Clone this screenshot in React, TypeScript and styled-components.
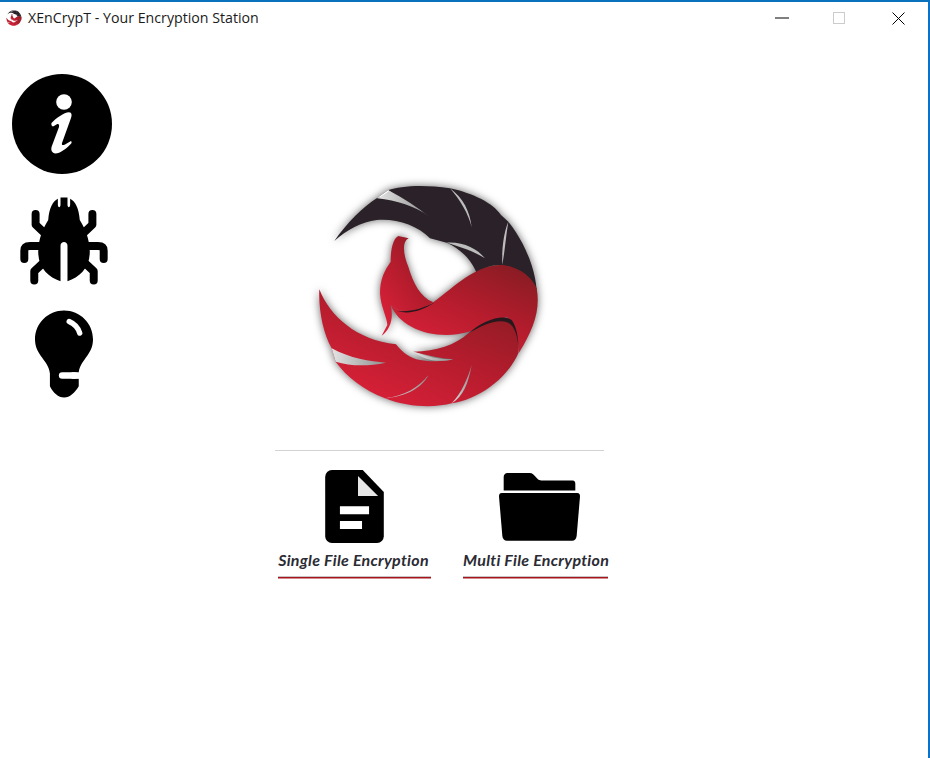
import React from "react";
import styled, { createGlobalStyle } from "styled-components";

const Global = createGlobalStyle`
  html, body { margin: 0; padding: 0; background: #fff; }
  * { box-sizing: border-box; }
`;

const Window = styled.div`
  width: 930px;
  height: 758px;
  background: #fff;
  border-top: 2px solid #0a72bd;
  border-right: 2px solid #0a72c8;
  display: flex;
  flex-direction: column;
  overflow: hidden;
`;

const TitleBar = styled.header`
  height: 35px;
  flex: none;
  display: flex;
  align-items: center;
  padding: 0 1px 3px 6px;
`;

const TitleIcon = styled.span`
  width: 16px;
  height: 16px;
  margin-right: 6px;
  display: flex;
`;

const Title = styled.h1`
  flex: 1;
  margin: 0 0 2px;
  font: 400 14.2px "Open Sans", "Noto Sans", sans-serif;
  color: #1b1b1b;
`;

const Control = styled.button<{ $nudge?: number }>`
  width: 58px;
  height: 30px;
  padding: 0 ${(p) => (p.$nudge ? p.$nudge * 2 : 0)}px 0 0;
  border: 0;
  background: none;
  display: flex;
  align-items: center;
  justify-content: center;
`;

const Body = styled.main`
  flex: 1;
  display: flex;
`;

const Sidebar = styled.nav`
  width: 124px;
  flex: none;
  padding-top: 37px;
  display: flex;
  flex-direction: column;
  align-items: center;
`;

const SideButton = styled.button<{ $gap: number; $shift: number }>`
  padding: 0;
  border: 0;
  background: none;
  display: block;
  line-height: 0;
  margin-left: ${(p) => p.$shift}px;
  margin-bottom: ${(p) => p.$gap}px;
`;

const Center = styled.section`
  width: 329px;
  margin-left: 151px;
  padding-top: 133px;
  display: flex;
  flex-direction: column;
  align-items: center;
`;

const LogoBox = styled.div`
  width: 280px;
  height: 250px;
  line-height: 0;
`;

const Divider = styled.hr`
  width: 329px;
  height: 1px;
  margin: 30px 0 19px;
  border: 0;
  background: #d2d2d2;
`;

const Actions = styled.div`
  align-self: flex-start;
  margin-left: 3px;
  display: flex;
  gap: 32px;
`;

const Action = styled.button<{ $width: number }>`
  width: ${(p) => p.$width}px;
  padding: 0;
  border: 0;
  background: none;
  display: flex;
  flex-direction: column;
  align-items: center;
`;

const ActionIcon = styled.span<{ $shift: number }>`
  height: 73px;
  display: flex;
  align-items: center;
  margin-left: ${(p) => p.$shift}px;
`;

const ActionLabel = styled.span<{ $nudge: number }>`
  width: 100%;
  height: 35px;
  padding: 6px ${(p) => p.$nudge}px 0 0;
  white-space: nowrap;
  text-align: center;
  letter-spacing: 0.28px;
  font: italic 700 16px/22px "Lato", "Open Sans", sans-serif;
  color: #2b2b33;
  border-bottom: 1px solid #a8141c;
  box-shadow: inset 0 -1px 0 #c9c4c4, 0 1px 0 rgba(168, 20, 28, 0.5);
`;

const Logo = ({ width, height, viewBox, soft }: { width: number; height: number; viewBox: string; soft?: boolean }) => (
  <svg width={width} height={height} viewBox={viewBox} style={soft ? { filter: "drop-shadow(0 0 4px rgba(0,0,0,.6))" } : undefined}>
    <defs>
      <linearGradient id="lg-red" x1="0.9" y1="0.1" x2="0.25" y2="0.95">
        <stop offset="0" stopColor="#8c1c24" />
        <stop offset="0.45" stopColor="#b21c2c" />
        <stop offset="1" stopColor="#d82038" />
      </linearGradient>
      <linearGradient id="lg-slit" x1="0" y1="0" x2="1" y2="0">
        <stop offset="0" stopColor="#e4e4e4" />
        <stop offset="1" stopColor="#8e8e8e" />
      </linearGradient>
    </defs>
    <path
      fill="#2a2228"
      d="M103 213C140 160 190 110 230 85L265 60C300 48 370 42 450 55C520 70 580 100 603 135L625 155C670 210 705 290 710 360L640 300L600 285C570 285 550 295 530 310C520 280 490 240 440 218L390 205C350 165 290 145 230 150C185 155 140 180 103 213Z"
    />
    <path
      fill="url(#lg-red)"
      d="M272 405C295 460 360 495 440 495C530 495 585 445 622 442C650 470 658 510 656 550C700 480 722 420 710 355C690 310 640 285 600 285C520 290 470 345 400 397C350 430 300 432 272 405Z"
    />
    <path
      fill="url(#lg-red)"
      d="M326 205L295 198C280 205 272 235 272 275C255 300 240 325 240 370C242 410 262 445 262 465L245 497C270 480 282 445 272 405C300 432 350 430 400 397C360 380 340 340 325 290C310 255 305 215 326 205Z"
    />
    <path
      fill="url(#lg-red)"
      d="M58 358C90 440 170 510 288 523C310 550 330 565 360 570C400 578 440 572 460 568C420 565 380 555 340 545C410 545 465 525 505 490C550 465 600 440 625 445C650 470 660 510 655 550C620 630 530 690 455 700C410 712 330 715 255 685C190 660 140 620 107 575L95 535C70 490 55 420 58 358Z"
    />
    <path fill="#26181c" d="M290 423C330 435 370 420 405 397C370 415 330 428 290 423ZM505 490C550 450 610 430 635 450C650 470 655 500 656 545C655 500 645 470 625 458C590 445 550 465 505 490Z" />
    <path fill="url(#lg-slit)" d="M95 535C150 565 210 575 258 578C200 590 150 588 107 575Z" />
    <path fill="url(#lg-slit)" d="M255 685C310 680 360 650 385 615C370 650 320 680 255 685Z" />
    <path fill="url(#lg-slit)" d="M340 545C380 560 420 568 460 568C420 578 375 572 340 545Z" />
    <path fill="url(#lg-slit)" d="M455 700C485 670 505 620 515 585C505 640 490 680 455 700Z" />
    <path fill="#fff" d="M230 85L265 60L280 72Z" />
    <path fill="url(#lg-slit)" d="M232 85C290 92 345 108 388 140C350 110 310 84 268 62C255 72 245 78 232 85Z" />
    <path fill="#bdbdbd" d="M450 55C480 90 505 130 515 172C510 125 490 85 450 55ZM440 218C480 230 525 245 555 265C530 235 490 215 440 218ZM625 155C610 190 605 240 607 285C615 240 618 195 625 155Z" />
  </svg>
);

const InfoIcon = () => (
  <svg width="100" height="100" viewBox="0 0 100 100">
    <circle cx="50" cy="50" r="50" fill="#000" />
    <circle cx="52" cy="28" r="7.8" fill="#fff" />
    <path
      fill="#fff"
      d="M39.5 49C44 44 52 38.5 57 38.2C60 38.5 60 41 59 44L50 69C49.5 71.5 51 71.5 53 70.5L59 67C60 68 59.8 69 58.5 70.3C54 75 48 79.5 43.5 79.5C40 79 38.5 76.5 39.7 72.5L47 53C47.5 50.5 46.5 49.5 44.5 50.5L41 52.5C39.7 52 39 50.5 39.5 49Z"
    />
  </svg>
);

const BugIcon = () => (
  <svg width="88" height="88" viewBox="0 0 265 262">
    <g fill="none" stroke="#000" strokeWidth="24" strokeLinecap="round" strokeLinejoin="round">
      <path d="M47 50V82L85 118" />
      <path d="M218 50V82L180 118" />
      <path d="M13 185V160Q13 146 30 146H80" />
      <path d="M252 185V160Q252 146 235 146H185" />
      <path d="M43 250V222L72 195" />
      <path d="M222 250V222L193 195" />
    </g>
    <path
      fill="#000"
      d="M122 0V22C122 32 114 32 114 22V4C98 12 88 32 85 68C68 95 56 125 55 160C53 210 85 240 122 252V145C122 130 143 130 143 145V252C180 240 212 210 210 160C209 125 197 95 180 68C177 32 167 12 151 4V22C151 32 143 32 143 22V0Z"
    />
  </svg>
);

const BulbIcon = () => (
  <svg width="58" height="88" viewBox="0 0 175 262">
    <path
      fill="#000"
      d="M87.5 0C136 0 175 39 175 87C175 135 133 150 132 190V228C120 248 105 262 88 262C70 262 55 248 45 228V190C42 150 0 135 0 87C0 39 39 0 87.5 0Z"
    />
    <path fill="none" stroke="#fff" strokeWidth="16" strokeLinecap="round" d="M103 33C120 40 130 52 135 68" />
    <path fill="none" stroke="#fff" strokeWidth="20" strokeLinecap="round" d="M82 196H120" />
    <path fill="#fff" d="M110 186H135V206H110Z" />
  </svg>
);

const FileIcon = () => (
  <svg width="59" height="73" viewBox="0 0 175 218">
    <path
      fill="#000"
      d="M20 0H112L175 66V198A20 20 0 0 1 155 218H20A20 20 0 0 1 0 198V20A20 20 0 0 1 20 0Z"
    />
    <path fill="#e6e6e6" d="M98 18L158 78H98Z" />
    <path fill="#fff" d="M44 108H131V132H44ZM44 152H110V176H44Z" />
  </svg>
);

const FolderIcon = () => (
  <svg width="81" height="68" viewBox="0 0 242 203">
    <path
      fill="#000"
      d="M26 0H92C100 0 104 5 110 12C115 18 118 22 126 22H220C226 22 228 26 228 32V52H14V12C14 5 18 0 26 0Z"
    />
    <path
      fill="#000"
      d="M8 60H234C240 60 242 64 242 70L232 188C231 197 226 202 218 202H24C16 202 11 197 10 188L0 70C0 64 2 60 8 60Z"
    />
  </svg>
);

export default function App() {
  return (
    <>
      <Global />
      <Window>
        <TitleBar>
          <TitleIcon>
            <Logo width={16} height={16} viewBox="40 30 690 690" />
          </TitleIcon>
          <Title>XEnCrypT - Your Encryption Station</Title>
          <Control aria-label="Minimize">
            <svg width="14" height="2" viewBox="0 0 14 2"><path d="M0 1H14" stroke="#000" strokeWidth="1" /></svg>
          </Control>
          <Control aria-label="Maximize" $nudge={1}>
            <svg width="12" height="12" viewBox="0 0 12 12"><rect x=".5" y=".5" width="11" height="11" fill="none" stroke="#ccc" /></svg>
          </Control>
          <Control aria-label="Close">
            <svg width="13" height="13" viewBox="0 0 13 13"><path d="M.5.5L12.5 12.5M12.5.5L.5 12.5" stroke="#000" strokeWidth="1" /></svg>
          </Control>
        </TitleBar>
        <Body>
          <Sidebar>
            <SideButton $gap={23} $shift={0} aria-label="About"><InfoIcon /></SideButton>
            <SideButton $gap={25} $shift={4} aria-label="Report a bug"><BugIcon /></SideButton>
            <SideButton $gap={0} $shift={4} aria-label="Ideas"><BulbIcon /></SideButton>
          </Sidebar>
          <Center>
            <LogoBox>
              <Logo width={280} height={250} viewBox="0 0 840 750" soft />
            </LogoBox>
            <Divider />
            <Actions>
              <Action $width={153}>
                <ActionIcon $shift={0}><FileIcon /></ActionIcon>
                <ActionLabel $nudge={2}>Single File Encryption</ActionLabel>
              </Action>
              <Action $width={145}>
                <ActionIcon $shift={8}><FolderIcon /></ActionIcon>
                <ActionLabel $nudge={0}>Multi File Encryption</ActionLabel>
              </Action>
            </Actions>
          </Center>
        </Body>
      </Window>
    </>
  );
}
